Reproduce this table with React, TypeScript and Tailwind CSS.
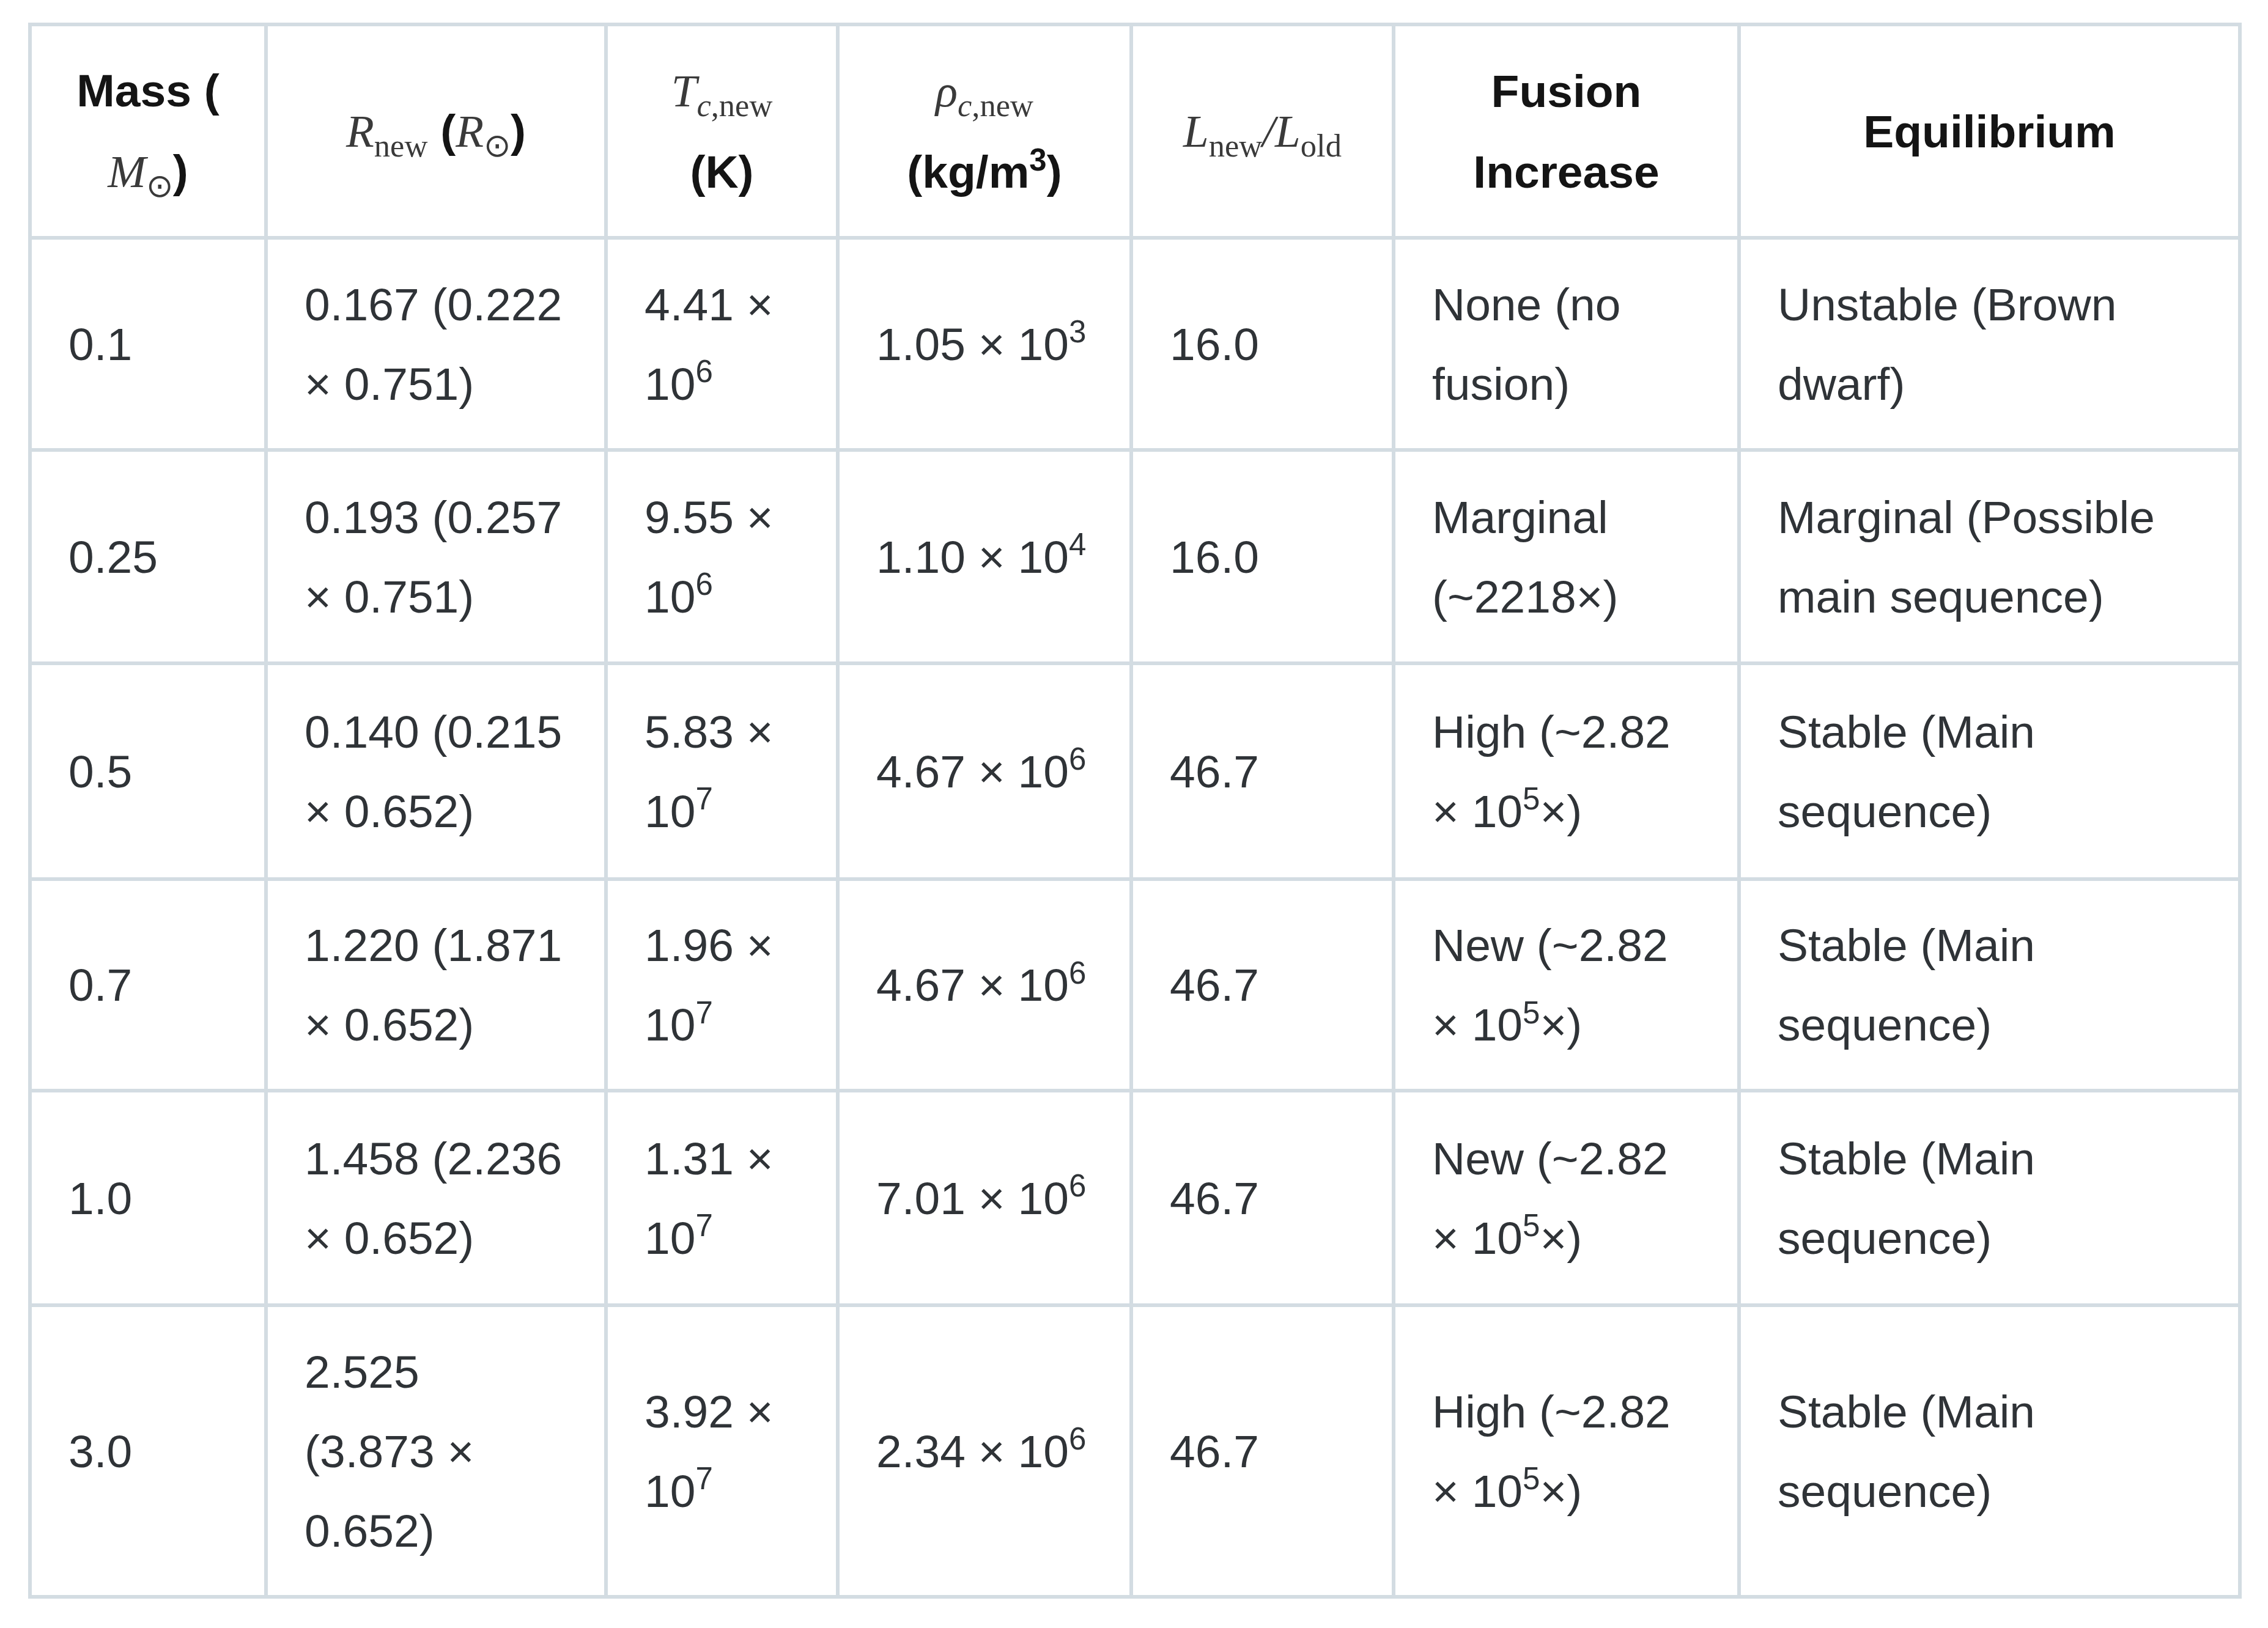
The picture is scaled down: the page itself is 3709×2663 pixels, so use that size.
import React from "react";

type Cell = React.ReactNode[];

const Sup = ({ children }: { children: React.ReactNode }) => (
  <sup className="text-[0.68em] top-[-0.55em]">{children}</sup>
);

const M = ({ children }: { children: React.ReactNode }) => (
  <span className="font-['Liberation_Serif',serif] italic font-normal text-[#3a3a3a]">{children}</span>
);

const Sub = ({ children }: { children: React.ReactNode }) => (
  <sub className="font-['Liberation_Serif',serif] not-italic font-normal text-[0.7em] bottom-[-0.3em] text-[#3a3a3a]">
    {children}
  </sub>
);

const header: Cell[] = [
  [
    "Mass (",
    <>
      <M>M</M>
      <Sub>⊙</Sub>)
    </>,
  ],
  [
    <>
      <M>R</M>
      <Sub>new</Sub> (<M>R</M>
      <Sub>⊙</Sub>)
    </>,
  ],
  [
    <>
      <M>T</M>
      <Sub>
        <i>c</i>,new
      </Sub>
    </>,
    "(K)",
  ],
  [
    <>
      <M>ρ</M>
      <Sub>
        <i>c</i>,new
      </Sub>
    </>,
    <>
      (kg/m<Sup>3</Sup>)
    </>,
  ],
  [
    <>
      <M>L</M>
      <Sub>new</Sub>
      <M>/L</M>
      <Sub>old</Sub>
    </>,
  ],
  ["Fusion", "Increase"],
  ["Equilibrium"],
];

const pow = (base: string, e: string, tail = "") => (
  <>
    {base}10<Sup>{e}</Sup>
    {tail}
  </>
);

const rows: Cell[][] = [
  [
    ["0.1"],
    ["0.167 (0.222", "× 0.751)"],
    ["4.41 ×", pow("", "6")],
    [pow("1.05 × ", "3")],
    ["16.0"],
    ["None (no", "fusion)"],
    ["Unstable (Brown", "dwarf)"],
  ],
  [
    ["0.25"],
    ["0.193 (0.257", "× 0.751)"],
    ["9.55 ×", pow("", "6")],
    [pow("1.10 × ", "4")],
    ["16.0"],
    ["Marginal", "(~2218×)"],
    ["Marginal (Possible", "main sequence)"],
  ],
  [
    ["0.5"],
    ["0.140 (0.215", "× 0.652)"],
    ["5.83 ×", pow("", "7")],
    [pow("4.67 × ", "6")],
    ["46.7"],
    ["High (~2.82", pow("× ", "5", "×)")],
    ["Stable (Main", "sequence)"],
  ],
  [
    ["0.7"],
    ["1.220 (1.871", "× 0.652)"],
    ["1.96 ×", pow("", "7")],
    [pow("4.67 × ", "6")],
    ["46.7"],
    ["New (~2.82", pow("× ", "5", "×)")],
    ["Stable (Main", "sequence)"],
  ],
  [
    ["1.0"],
    ["1.458 (2.236", "× 0.652)"],
    ["1.31 ×", pow("", "7")],
    [pow("7.01 × ", "6")],
    ["46.7"],
    ["New (~2.82", pow("× ", "5", "×)")],
    ["Stable (Main", "sequence)"],
  ],
  [
    ["3.0"],
    ["2.525", "(3.873 ×", "0.652)"],
    ["3.92 ×", pow("", "7")],
    [pow("2.34 × ", "6")],
    ["46.7"],
    ["High (~2.82", pow("× ", "5", "×)")],
    ["Stable (Main", "sequence)"],
  ],
];

export default function App() {
  return (
    <div className="min-h-[2663px] bg-white pt-[37px] pl-[46px] font-['Liberation_Sans',Arial,sans-serif]">
      <div className="grid w-fit grid-cols-[386px_556px_379px_480px_429px_565px_819px] grid-rows-[349px_347px_349px_353px_346px_351px_477px] border-t-[6px] border-l-[6px] border-[#d3dce2]">
        {header.map((cell, i) => (
          <div
            key={`h${i}`}
            className="flex flex-col items-center justify-center border-r-[6px] border-b-[6px] border-[#d3dce2] px-[40px] text-center text-[75px] leading-[132px] font-bold text-[#141414] whitespace-nowrap"
          >
            {cell.map((line, j) => (
              <div key={j}>{line}</div>
            ))}
          </div>
        ))}
        {rows.map((row, r) =>
          row.map((cell, c) => (
            <div
              key={`r${r}c${c}`}
              className="flex flex-col justify-center border-r-[6px] border-b-[6px] border-[#d3dce2] pl-[60px] pr-[30px] text-[75px] leading-[130px] text-[#2f3337] whitespace-nowrap"
            >
              {cell.map((line, j) => (
                <div key={j}>{line}</div>
              ))}
            </div>
          ))
        )}
      </div>
    </div>
  );
}
